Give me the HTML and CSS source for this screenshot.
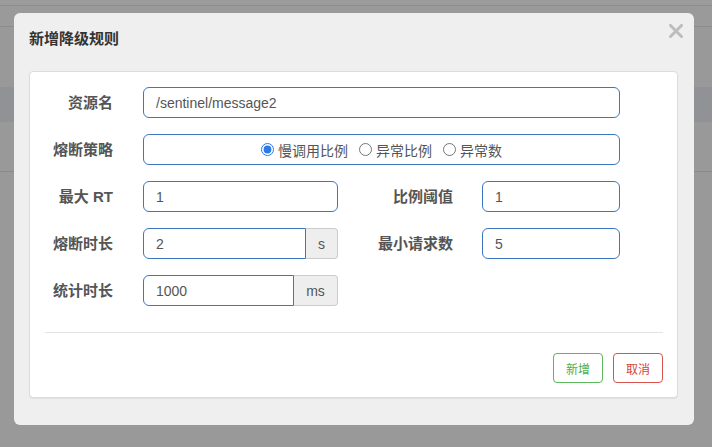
FILE: index.html
```html
<!DOCTYPE html>
<html lang="zh-CN">
<head>
<meta charset="utf-8">
<title>新增降级规则</title>
<link rel="stylesheet" href="styles.css">
</head>
<body>
<div class="page">
  <div class="bg bg-a"></div>
  <div class="bg bg-b"></div>
  <div class="bg bg-c"></div>
  <div class="bg bg-band"></div>
  <div class="bg bg-d"></div>
  <div class="bg bg-e"></div>
</div>

<div class="modal">
  <div class="modal-header">
    <h4 class="modal-title">新增降级规则</h4>
    <button class="close" type="button" aria-label="关闭">
      <svg width="14" height="14" viewBox="0 0 14 14"><path d="M1.5 1.5 L12.5 12.5 M12.5 1.5 L1.5 12.5" stroke="#bdbdbd" stroke-width="3" stroke-linecap="square"/></svg>
    </button>
  </div>
  <div class="card">
    <form class="form">
      <label class="lbl c1 r1">资源名</label>
      <input class="ctrl wide r1" type="text" value="/sentinel/message2">

      <label class="lbl c1 r2">熔断策略</label>
      <div class="ctrl wide r2 radios">
        <label class="radio"><input type="radio" name="grade" checked><span>慢调用比例</span></label>
        <label class="radio"><input type="radio" name="grade"><span>异常比例</span></label>
        <label class="radio"><input type="radio" name="grade"><span>异常数</span></label>
      </div>

      <label class="lbl c1 r3">最大 RT</label>
      <input class="ctrl f1 r3" type="text" value="1">
      <label class="lbl c2 r3">比例阈值</label>
      <input class="ctrl f2 r3" type="text" value="1">

      <label class="lbl c1 r4">熔断时长</label>
      <div class="group f1 r4">
        <input class="ctrl grp" type="text" value="2">
        <span class="addon addon-s">s</span>
      </div>
      <label class="lbl c2 r4">最小请求数</label>
      <input class="ctrl f2 r4" type="text" value="5">

      <label class="lbl c1 r5">统计时长</label>
      <div class="group f1 r5">
        <input class="ctrl grp" type="text" value="1000">
        <span class="addon addon-ms">ms</span>
      </div>
    </form>
    <div class="sep"></div>
    <div class="actions">
      <button class="btn btn-ok" type="button">新增</button>
      <button class="btn btn-cancel" type="button">取消</button>
    </div>
  </div>
</div>
</body>
</html>
```

FILE: styles.css
```css
* { box-sizing: border-box; }
html, body { margin: 0; padding: 0; }
body {
  width: 712px;
  height: 447px;
  overflow: hidden;
  background: #999999;
  font-family: "Liberation Sans", "Noto Sans CJK SC", sans-serif;
  color: #555;
}
.page { display: flex; flex-direction: column; }
.bg { width: 100%; }
.bg-a { height: 6px; background: #9c9c9c; border-bottom: 1px solid #8e8e8e; }
.bg-b { height: 21px; background: #9a9a9a; border-bottom: 1px solid #8c8c8c; }
.bg-c { height: 60px; background: #999; }
.bg-band { height: 35px; background: #919295; }
.bg-d { height: 50px; background: #999; border-bottom: 1px solid #8a8a8a; }
.bg-e { height: 274px; background: #999; }

.modal {
  position: absolute;
  left: 14px;
  top: 13px;
  width: 680px;
  height: 412px;
  background: #efefef;
  border-radius: 6px;
  padding: 0 16px 0 15px;
}
.modal-header {
  height: 58px;
  padding-top: 16px;
  position: relative;
}
.modal-title {
  margin: 0;
  font-size: 15px;
  line-height: 20px;
  font-weight: 700;
  color: #333;
  font-family: "Liberation Sans", "Noto Sans CJK SC", sans-serif;
}
.close {
  position: absolute;
  right: -5px;
  top: 11px;
  width: 14px;
  height: 14px;
  padding: 0;
  border: 0;
  background: none;
  display: block;
}
.close svg { display: block; }

.card {
  background: #fff;
  border: 1px solid #dcdcdc;
  border-radius: 4px;
  box-shadow: 0 1px 1px rgba(0,0,0,.06);
  padding: 15px 14px 14px 15px;
  height: 327px;
}
.form {
  display: grid;
  grid-template-columns: 68px 30px 195px 115px 29px 138px;
  grid-template-rows: repeat(5, 31px);
  row-gap: 16px;
}
.lbl {
  font-size: 15px;
  font-weight: 700;
  color: #555;
  text-align: right;
  align-self: center;
  line-height: 20px;
  white-space: nowrap;
}
.c1 { grid-column: 1; }
.c2 { grid-column: 4; }
.wide { grid-column: 3 / 7; }
.f1 { grid-column: 3; }
.f2 { grid-column: 6; }
.r1 { grid-row: 1; }
.r2 { grid-row: 2; }
.r3 { grid-row: 3; }
.r4 { grid-row: 4; }
.r5 { grid-row: 5; }

.ctrl {
  height: 31px;
  border: 1px solid #3f77bc;
  border-radius: 6px;
  background: #fff;
  font-family: "Liberation Sans", "Noto Sans CJK SC", sans-serif;
  font-size: 14px;
  color: #555;
  padding: 0 12px;
  margin: 0;
  outline: none;
  width: 100%;
}
.radios {
  display: flex;
  align-items: center;
  justify-content: center;
  padding: 0;
}
.radio {
  display: flex;
  align-items: center;
  font-size: 14px;
  color: #555;
  margin-right: 11px;
}
.radio:last-child { margin-right: 0; }
.radio input {
  width: 13px;
  height: 13px;
  margin: 0 4px 0 0;
  accent-color: #2b7ae5;
}
.group { display: flex; height: 31px; }
.group .grp {
  flex: 1;
  min-width: 0;
  border-radius: 6px 0 0 6px;
}
.addon {
  display: flex;
  align-items: center;
  justify-content: center;
  background: #eee;
  border: 1px solid #ccc;
  border-left: 0;
  border-radius: 0 4px 4px 0;
  font-size: 14px;
  color: #555;
}
.addon-s { width: 32px; }
.addon-ms { width: 44px; }

.sep {
  margin-top: 26px;
  height: 1px;
  background: #e3e3e3;
}
.actions {
  margin-top: 20px;
  display: flex;
  justify-content: flex-end;
  gap: 10px;
}
.btn {
  width: 50px;
  height: 30px;
  border-radius: 4px;
  background: #fff;
  font-family: "Liberation Sans", "Noto Sans CJK SC", sans-serif;
  font-size: 12px;
  padding: 0;
  margin: 0;
}
.btn-ok { border: 1px solid #5cb85c; color: #4cae4c; }
.btn-cancel { border: 1px solid #d9534f; color: #d43f3a; }
```
